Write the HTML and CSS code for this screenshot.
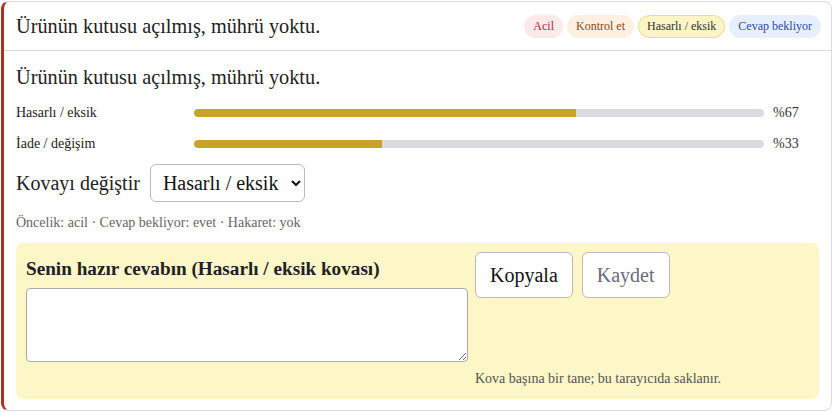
FILE: index.html
```html
<!DOCTYPE html>
<html lang="tr">
<head>
  <meta charset="UTF-8">
  <meta name="viewport" content="width=device-width, initial-scale=1.0">
  <title>Mesaj</title>
  <link rel="stylesheet" href="styles.css">
</head>
<body>
  <div class="card">
    <!-- Header -->
    <div class="card-head">
      <div class="card-title">Ürünün kutusu açılmış, mührü yoktu.</div>
      <div class="chips">
        <span class="chip chip-red">Acil</span>
        <span class="chip chip-orange">Kontrol et</span>
        <span class="chip chip-yellow">Hasarlı / eksik</span>
        <span class="chip chip-blue">Cevap bekliyor</span>
      </div>
    </div>

    <div class="card-body">
      <p class="message">Ürünün kutusu açılmış, mührü yoktu.</p>

      <!-- Scores -->
      <div class="scores">
        <span class="score-label">Hasarlı / eksik</span>
        <div class="track"><div class="fill" style="width: 67%"></div></div>
        <span class="score-pct">%67</span>

        <span class="score-label">İade / değişim</span>
        <div class="track"><div class="fill" style="width: 33%"></div></div>
        <span class="score-pct">%33</span>
      </div>

      <!-- Bucket -->
      <div class="bucket-row">
        <label for="bucket">Kovayı değiştir</label>
        <select id="bucket">
          <option selected>Hasarlı / eksik</option>
          <option>İade / değişim</option>
          <option>Kargo</option>
        </select>
      </div>

      <div class="meta">Öncelik: acil · Cevap bekliyor: evet · Hakaret: yok</div>

      <!-- Saved reply -->
      <div class="reply">
        <div class="reply-left">
          <h3>Senin hazır cevabın (Hasarlı / eksik kovası)</h3>
          <textarea id="replyText"></textarea>
        </div>
        <div class="reply-right">
          <div class="buttons">
            <button type="button">Kopyala</button>
            <button type="button" class="muted">Kaydet</button>
          </div>
          <div class="note">Kova başına bir tane; bu tarayıcıda saklanır.</div>
        </div>
      </div>
    </div>
  </div>
</body>
</html>
```

FILE: styles.css
```css
body {
  margin: 0;
  font-family: "Liberation Serif", Tinos, "Times New Roman", Times, "Nimbus Roman", "DejaVu Serif", serif;
  color: #222;
  background: #fff;
}

.card {
  margin: 1px 3px 1px 1px;
  border: 1px solid #dcdcdc;
  border-left: 3px solid #b0301f;
  border-radius: 8px;
  background: #fff;
}

.card-head {
  display: flex;
  justify-content: space-between;
  align-items: center;
  padding: 13px 10px 12px 12px;
  border-bottom: 1px solid #dcdcdc;
}

.card-title {
  font-size: 20.3px;
  line-height: 23px;
}

.chips {
  display: flex;
  gap: 4px;
}

.chip {
  font-size: 12px;
  line-height: 21px;
  padding: 0 8px;
  border: 1px solid transparent;
  border-radius: 12px;
}

.chip-red {
  background: #fde8ea;
  color: #b02a37;
}

.chip-orange {
  background: #fdf0e2;
  color: #8a4a18;
}

.chip-yellow {
  background: #fcf5c6;
  border-color: #e9dc8e;
  color: #333;
}

.chip-blue {
  background: #e8effc;
  color: #2a48b0;
}

.card-body {
  padding: 15px 12px 11px 12px;
}

.message {
  margin: 0 0 15px;
  font-size: 20.3px;
  line-height: 23px;
}

.scores {
  display: grid;
  grid-template-columns: 169px 1fr 46px;
  column-gap: 9px;
  row-gap: 13px;
  align-items: center;
  font-size: 14px;
  line-height: 18px;
}

.track {
  height: 8px;
  background: #dcdae1;
  border-radius: 4px;
  overflow: hidden;
}

.fill {
  height: 100%;
  background: #c9a22c;
  border-radius: 4px 0 0 4px;
}

.score-pct {
  color: #333;
}

.bucket-row {
  display: flex;
  align-items: center;
  gap: 10px;
  margin-top: 11px;
  font-size: 20px;
}

.bucket-row select {
  font-family: inherit;
  font-size: 20px;
  color: #111;
  height: 38px;
  width: 155px;
  padding: 0 6px 0 8px;
  border: 1px solid #bbb;
  border-radius: 6px;
  background: #fff;
}

.meta {
  margin-top: 13px;
  font-size: 14px;
  line-height: 16px;
  color: #666;
}

.reply {
  display: flex;
  gap: 7px;
  margin-top: 12px;
  padding: 9px 10px 13px 10px;
  background: #fdf6c6;
  border-radius: 7px;
}

.reply-left {
  width: 442px;
}

.reply h3 {
  margin: 5px 0 8px;
  font-size: 19.2px;
  line-height: 23px;
  font-weight: bold;
}

.reply textarea {
  display: block;
  box-sizing: border-box;
  width: 442px;
  height: 74px;
  border: 1px solid #aaa;
  border-radius: 4px;
  background: #fff;
  resize: vertical;
}

.reply-right {
  display: flex;
  flex-direction: column;
}

.buttons {
  display: flex;
  gap: 9px;
}

button {
  font-family: inherit;
  font-size: 20px;
  height: 46px;
  padding: 0 14px;
  border: 1px solid #bbb;
  border-radius: 6px;
  background: #fff;
  color: #111;
  cursor: pointer;
}

button.muted {
  color: #6b6b78;
}

.note {
  margin-top: 73px;
  font-size: 14px;
  line-height: 15px;
  color: #555;
}
```
